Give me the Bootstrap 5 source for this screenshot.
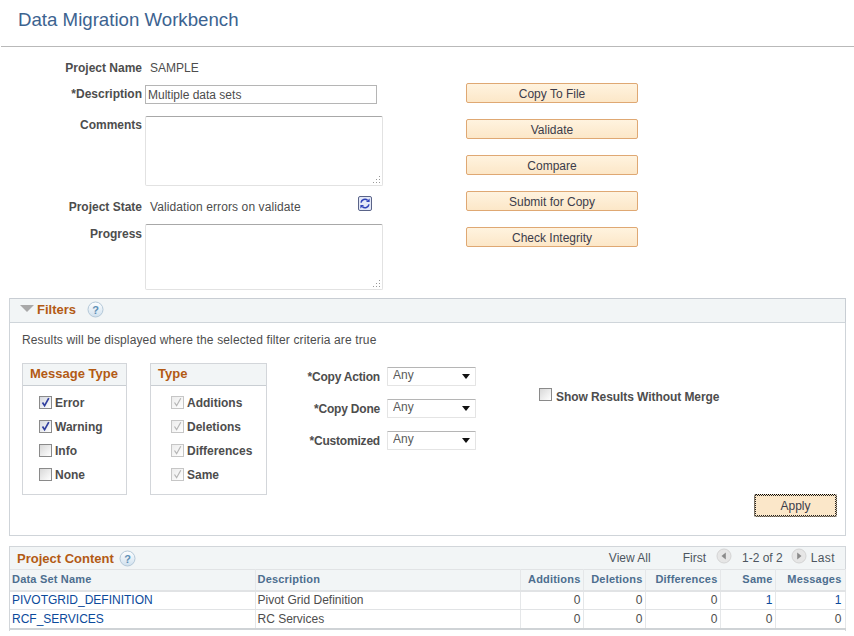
<!DOCTYPE html>
<html lang="en">
<head>
<meta charset="utf-8">
<title>Data Migration Workbench</title>
<link href="https://cdn.jsdelivr.net/npm/bootstrap@5.3.0/dist/css/bootstrap.min.css" rel="stylesheet">
<style>
html,body{margin:0;height:636px;overflow:hidden}
body{font-family:"Liberation Sans",Arial,sans-serif;font-size:12px;color:#4a4a4a;background:#fff;line-height:1.2}
.pg-title{height:47px;margin:0 0 0 1px;padding:10px 0 0 17px;border-bottom:1px solid #b9b9b9;font-size:18.67px;line-height:20px;font-weight:400;color:#3c6390}
.form-area{height:251px;position:relative}
.left-col{width:392px;padding-top:11px}
.lbl{width:142px;font-weight:700;text-align:right;color:#4d4d4d;flex:none}
.val{margin-left:8px;color:#4d4d4d}
.val-w{letter-spacing:.1px}
.r-name{height:20px}
.r-desc{height:19px;margin-top:7px}
.r-comm{height:70px;margin-top:12px}
.r-state{height:20px;margin-top:11px}
.r-prog{height:66px;margin-top:7px}
.r-comm .lbl{padding-top:2px}
.r-prog .lbl{padding-top:3px}
.r-desc .lbl{padding-top:2px}
.tx-in{width:232px;height:19px;margin-left:3px;padding:1px 2px;border:1px solid #b5b5b5;font:12px "Liberation Sans",Arial,sans-serif;color:#4d4d4d;border-radius:0;outline:0}
.tx-ar{width:238px;margin-left:3px;border:1px solid #e2e2e2;border-top-color:#a8a8a8;border-radius:2px;padding:2px;resize:none;outline:0;display:block;background:#fff url("data:image/svg+xml,%3Csvg xmlns='http://www.w3.org/2000/svg' width='8' height='8'%3E%3Cg fill='%23999'%3E%3Crect x='6' y='0' width='1' height='1'/%3E%3Crect x='6' y='3' width='1' height='1'/%3E%3Crect x='3' y='3' width='1' height='1'/%3E%3Crect x='6' y='6' width='1' height='1'/%3E%3Crect x='3' y='6' width='1' height='1'/%3E%3Crect x='0' y='6' width='1' height='1'/%3E%3C/g%3E%3C/svg%3E") no-repeat right 1px bottom 1px}
.r-comm .tx-ar{height:70px}
.r-prog .tx-ar{height:66px}
.rf{margin-left:57px;margin-top:-8px;flex:none;display:block}
.btn-col{width:172px;margin-left:74px;padding-top:36px;gap:16px}
.pt-btn{height:20px;padding:1px 0 0;border:1px solid #dfa873;border-radius:2px;background:linear-gradient(#fff3df,#fce7c8);color:#3c3c4a;font-size:12px;line-height:18px;width:172px}
.pt-btn:hover{background:linear-gradient(#fff3df,#fce7c8);color:#3c3c4a;border-color:#dfa873}
.fbox{margin:0 8px 0 9px;height:238px;border:1px solid #cfd4d9;border-top:0}
.fhead{height:25px;background:#f2f5f6;border-top:1px solid #c8cdd3;border-bottom:1px solid #cfd5da;padding-left:10px;padding-bottom:2px;margin:0 -1px 0 0;border-right:1px solid #c8cdd3}
.tri{width:0;height:0;border-left:7px solid transparent;border-right:7px solid transparent;border-top:7px solid #a9a9a9;margin-right:3px;margin-top:-2px}
.sec-t{font-size:13px;font-weight:700;color:#b35a14}
.hlp{margin-left:11px;display:block}
.fbody{padding:10px 8px 0 12px;position:relative;height:212px}
.intro{color:#4d4d4d;height:15px;margin-bottom:15px;letter-spacing:.14px}
.grp{border:1px solid #d3d6da;height:132px;flex:none}
.grp-a{width:105px}
.grp-b{width:117px;margin-left:23px}
.grp-h{height:22px;background:#f2f5f6;border-bottom:1px solid #c9ced3;font-size:13px;font-weight:700;color:#b35a14;line-height:19px;padding-left:7px}
.grp-l{padding:5px 0 0 16px}
.grp-b .grp-l{padding-left:20px}
.ck-row{height:24px;font-weight:700;color:#4d4d4d;gap:3px;display:flex;align-items:center;margin:0}
.chk.form-check-input{width:13px;height:13px;margin:-2px 0 0;flex:none;border:1px solid #8a8a8a;border-radius:0;opacity:1;background-color:#eee;background-image:linear-gradient(135deg,#d8d8d8,#fff);background-size:auto;box-shadow:none;float:none}
.chk.form-check-input:checked{background-color:#eee;border-color:#8a8a8a;background-size:auto;background-repeat:no-repeat;background-position:center;background-image:url("data:image/svg+xml,%3Csvg xmlns='http://www.w3.org/2000/svg' viewBox='0 0 11 11'%3E%3Cpath d='M2.5 5.5 4.6 8.7 8.8 1.2' fill='none' stroke='%23303f9f' stroke-width='1.7'/%3E%3C/svg%3E"),linear-gradient(135deg,#d5d8e0,#fff)}
.chk.form-check-input:disabled{border-color:#c6c6c6;opacity:1}
.chk.form-check-input:disabled:checked{background-image:url("data:image/svg+xml,%3Csvg xmlns='http://www.w3.org/2000/svg' viewBox='0 0 11 11'%3E%3Cpath d='M2.5 5.5 4.6 8.7 8.8 1.2' fill='none' stroke='%23b5b5b5' stroke-width='1.2'/%3E%3C/svg%3E"),linear-gradient(135deg,#ececec,#fff)}
.chk:disabled+span{opacity:1}
.sel-col{width:185px;margin-left:24px;padding-top:3px;flex:none}
.sel-row{height:20px;margin-bottom:12px;align-items:center}
.sel-lbl{width:90px;margin-left:-1px;text-align:right;font-weight:700;color:#4d4d4d;padding-top:3px;flex:none;letter-spacing:-.2px}
.sel-sq.form-select{width:89px;flex:none;height:19px;margin-left:7px;padding:0 0 3px 5px;font-size:12px;line-height:14px;color:#5a5a5a;border:1px solid #e4e4e4;border-top-color:#b5b5b5;border-radius:1px;box-shadow:none;background-color:#fff;background-size:8px 5px;background-position:right 5px center;background-image:url("data:image/svg+xml,%3Csvg xmlns='http://www.w3.org/2000/svg' viewBox='0 0 8 5'%3E%3Cpath d='M0 0h8L4 5z' fill='%23111'/%3E%3C/svg%3E")}
.show-col{margin-left:63px;padding-top:22px;font-weight:700;color:#4d4d4d}
.show-col .ck-row{gap:4px;letter-spacing:-.07px}
.show-col .chk.form-check-input{margin-top:-5px}
.apply-wrap{position:absolute;right:8px;bottom:18px}
.apply-btn{width:83px;height:23px;padding:1px 0 0;border-radius:2px;border:1px dotted #000;outline:1px dotted #222;outline-offset:-2px;background:#fbe7c9;color:#3c3c4a;font-size:12px;line-height:19px}
.apply-btn:hover{background:#fbe7c9;color:#3c3c4a;border-color:#000}
.gbox{margin:10px 8px 0 9px;height:85px;border:1px solid #d2d6da;border-bottom:0}
.ghead{height:22px;background:#f2f5f6;padding:0 10px 0 7px;color:#4d4d4d}
.ghead .sec-t{margin-top:2px}
.ghead .hlp{margin-left:5px}
.nav-t{color:#4d5560}
.nav-l{letter-spacing:.4px}
.pg-ic{margin-top:-4px;display:block;flex:none}
.pg-gap{margin-left:10px;margin-right:10px}
.gtab.table{width:835px;margin:0;table-layout:fixed;font-size:12px;border-collapse:collapse;--bs-table-bg:transparent;color:#4d4d4d}
.gtab.table th,.gtab.table td{padding:0 2px;vertical-align:middle;border:0;border-right:1px solid #e5e7e9;white-space:nowrap;box-shadow:none;color:#4d4d4d}
.gtab.table thead th{height:21px;background:#f2f5f6;font-size:11px;font-weight:700;color:#4d6e8f;border-bottom:2px solid #e1e3e5;border-top:1px solid #e1e3e5;letter-spacing:.2px}
.gtab.table tbody td{height:19px;border-bottom:1px solid #e1e3e5}
.gtab.table tbody tr:last-child td{border-bottom:2px solid #cfd3d6}
.gtab.table a{color:#0b4a9b;text-decoration:none}
.last-c{padding-right:3px!important}
</style>
</head>
<body>
<h1 class="pg-title">Data Migration Workbench</h1>
<div class="form-area d-flex">
  <div class="left-col d-flex flex-column">
    <div class="r-name d-flex align-items-center"><span class="lbl">Project Name</span><span class="val">SAMPLE</span></div>
    <div class="r-desc d-flex"><span class="lbl">*Description</span><input class="tx-in" type="text" value="Multiple data sets"></div>
    <div class="r-comm d-flex"><span class="lbl">Comments</span><textarea class="tx-ar"></textarea></div>
    <div class="r-state d-flex align-items-center"><span class="lbl">Project State</span><span class="val val-w">Validation errors on validate</span>
      <svg class="rf" width="14" height="15" viewBox="0 0 14 15"><rect x=".5" y=".5" width="13" height="14" rx="1.5" fill="#e3e8f8" stroke="#5a6488"/><path d="M3 6.6A4 4 0 0 1 9.6 4.4" fill="none" stroke="#2f42b8" stroke-width="1.5"/><path d="M8 6h3.6V2.6z" fill="#2f42b8"/><path d="M11 8.4A4 4 0 0 1 4.4 10.6" fill="none" stroke="#2f42b8" stroke-width="1.5"/><path d="M6 9H2.4v3.4z" fill="#2f42b8"/></svg>
    </div>
    <div class="r-prog d-flex"><span class="lbl">Progress</span><textarea class="tx-ar"></textarea></div>
  </div>
  <div class="btn-col d-flex flex-column">
    <button type="button" class="btn pt-btn">Copy To File</button>
    <button type="button" class="btn pt-btn">Validate</button>
    <button type="button" class="btn pt-btn">Compare</button>
    <button type="button" class="btn pt-btn">Submit for Copy</button>
    <button type="button" class="btn pt-btn">Check Integrity</button>
  </div>
</div>
<section class="fbox">
  <div class="fhead d-flex align-items-center">
    <span class="tri"></span><span class="sec-t">Filters</span>
    <svg class="hlp" width="17" height="17" viewBox="0 0 17 17"><defs><linearGradient id="hg" x1="0" y1="0" x2="0" y2="1"><stop offset="0" stop-color="#fff"/><stop offset="1" stop-color="#cfe0ee"/></linearGradient></defs><circle cx="8.5" cy="8.5" r="7.5" fill="url(#hg)" stroke="#b4c8d8"/><text x="8.5" y="12.5" text-anchor="middle" font-family="Liberation Sans" font-size="11" font-weight="700" fill="#5f8fb5">?</text></svg>
  </div>
  <div class="fbody">
    <div class="intro">Results will be displayed where the selected filter criteria are true</div>
    <div class="d-flex">
      <div class="grp grp-a">
        <div class="grp-h">Message Type</div>
        <div class="grp-l">
          <label class="ck-row"><input class="chk form-check-input" type="checkbox" checked><span>Error</span></label>
          <label class="ck-row"><input class="chk form-check-input" type="checkbox" checked><span>Warning</span></label>
          <label class="ck-row"><input class="chk form-check-input" type="checkbox"><span>Info</span></label>
          <label class="ck-row"><input class="chk form-check-input" type="checkbox"><span>None</span></label>
        </div>
      </div>
      <div class="grp grp-b">
        <div class="grp-h">Type</div>
        <div class="grp-l">
          <label class="ck-row"><input class="chk form-check-input" type="checkbox" checked disabled><span>Additions</span></label>
          <label class="ck-row"><input class="chk form-check-input" type="checkbox" checked disabled><span>Deletions</span></label>
          <label class="ck-row"><input class="chk form-check-input" type="checkbox" checked disabled><span>Differences</span></label>
          <label class="ck-row"><input class="chk form-check-input" type="checkbox" checked disabled><span>Same</span></label>
        </div>
      </div>
      <div class="sel-col">
        <div class="sel-row d-flex"><span class="sel-lbl">*Copy Action</span><select class="sel-sq form-select"><option>Any</option></select></div>
        <div class="sel-row d-flex"><span class="sel-lbl">*Copy Done</span><select class="sel-sq form-select"><option>Any</option></select></div>
        <div class="sel-row d-flex"><span class="sel-lbl">*Customized</span><select class="sel-sq form-select"><option>Any</option></select></div>
      </div>
      <div class="show-col"><label class="ck-row"><input class="chk form-check-input" type="checkbox"><span>Show Results Without Merge</span></label></div>
    </div>
    <div class="apply-wrap"><button type="button" class="btn apply-btn">Apply</button></div>
  </div>
</section>
<section class="gbox">
  <div class="ghead d-flex align-items-center">
    <span class="sec-t">Project Content</span>
    <svg class="hlp" width="17" height="17" viewBox="0 0 17 17"><circle cx="8.5" cy="8.5" r="7.5" fill="url(#hg)" stroke="#b4c8d8"/><text x="8.5" y="12.5" text-anchor="middle" font-family="Liberation Sans" font-size="11" font-weight="700" fill="#5f8fb5">?</text></svg>
    <span class="nav-t ms-auto">View All</span>
    <span class="nav-t ms-4 ps-2">First</span>
    <svg class="pg-ic pg-gap" width="16" height="16" viewBox="0 0 16 16"><circle cx="8" cy="8" r="7" fill="#e6e6e6" stroke="#d4d4d4"/><path d="M9.8 4.5v7L5.5 8z" fill="#8a8a8a"/></svg>
    <span class="nav-t">1-2 of 2</span>
    <svg class="pg-ic ms-2" width="16" height="16" viewBox="0 0 16 16"><circle cx="8" cy="8" r="7" fill="#e6e6e6" stroke="#d4d4d4"/><path d="M6.2 4.5v7L10.5 8z" fill="#8a8a8a"/></svg>
    <span class="nav-t nav-l ms-1">Last</span>
  </div>
  <table class="table gtab">
    <colgroup><col style="width:245px"><col style="width:265px"><col style="width:63px"><col style="width:62px"><col style="width:75px"><col style="width:55px"><col style="width:70px"></colgroup>
    <thead><tr><th>Data Set Name</th><th>Description</th><th class="text-end">Additions</th><th class="text-end">Deletions</th><th class="text-end">Differences</th><th class="text-end">Same</th><th class="text-end last-c">Messages</th></tr></thead>
    <tbody>
      <tr><td><a href="#">PIVOTGRID_DEFINITION</a></td><td>Pivot Grid Definition</td><td class="text-end">0</td><td class="text-end">0</td><td class="text-end">0</td><td class="text-end"><a href="#">1</a></td><td class="text-end last-c"><a href="#">1</a></td></tr>
      <tr><td><a href="#">RCF_SERVICES</a></td><td>RC Services</td><td class="text-end">0</td><td class="text-end">0</td><td class="text-end">0</td><td class="text-end">0</td><td class="text-end last-c">0</td></tr>
    </tbody>
  </table>
</section>
<script src="https://cdn.jsdelivr.net/npm/bootstrap@5.3.0/dist/js/bootstrap.bundle.min.js"></script>
</body>
</html>
